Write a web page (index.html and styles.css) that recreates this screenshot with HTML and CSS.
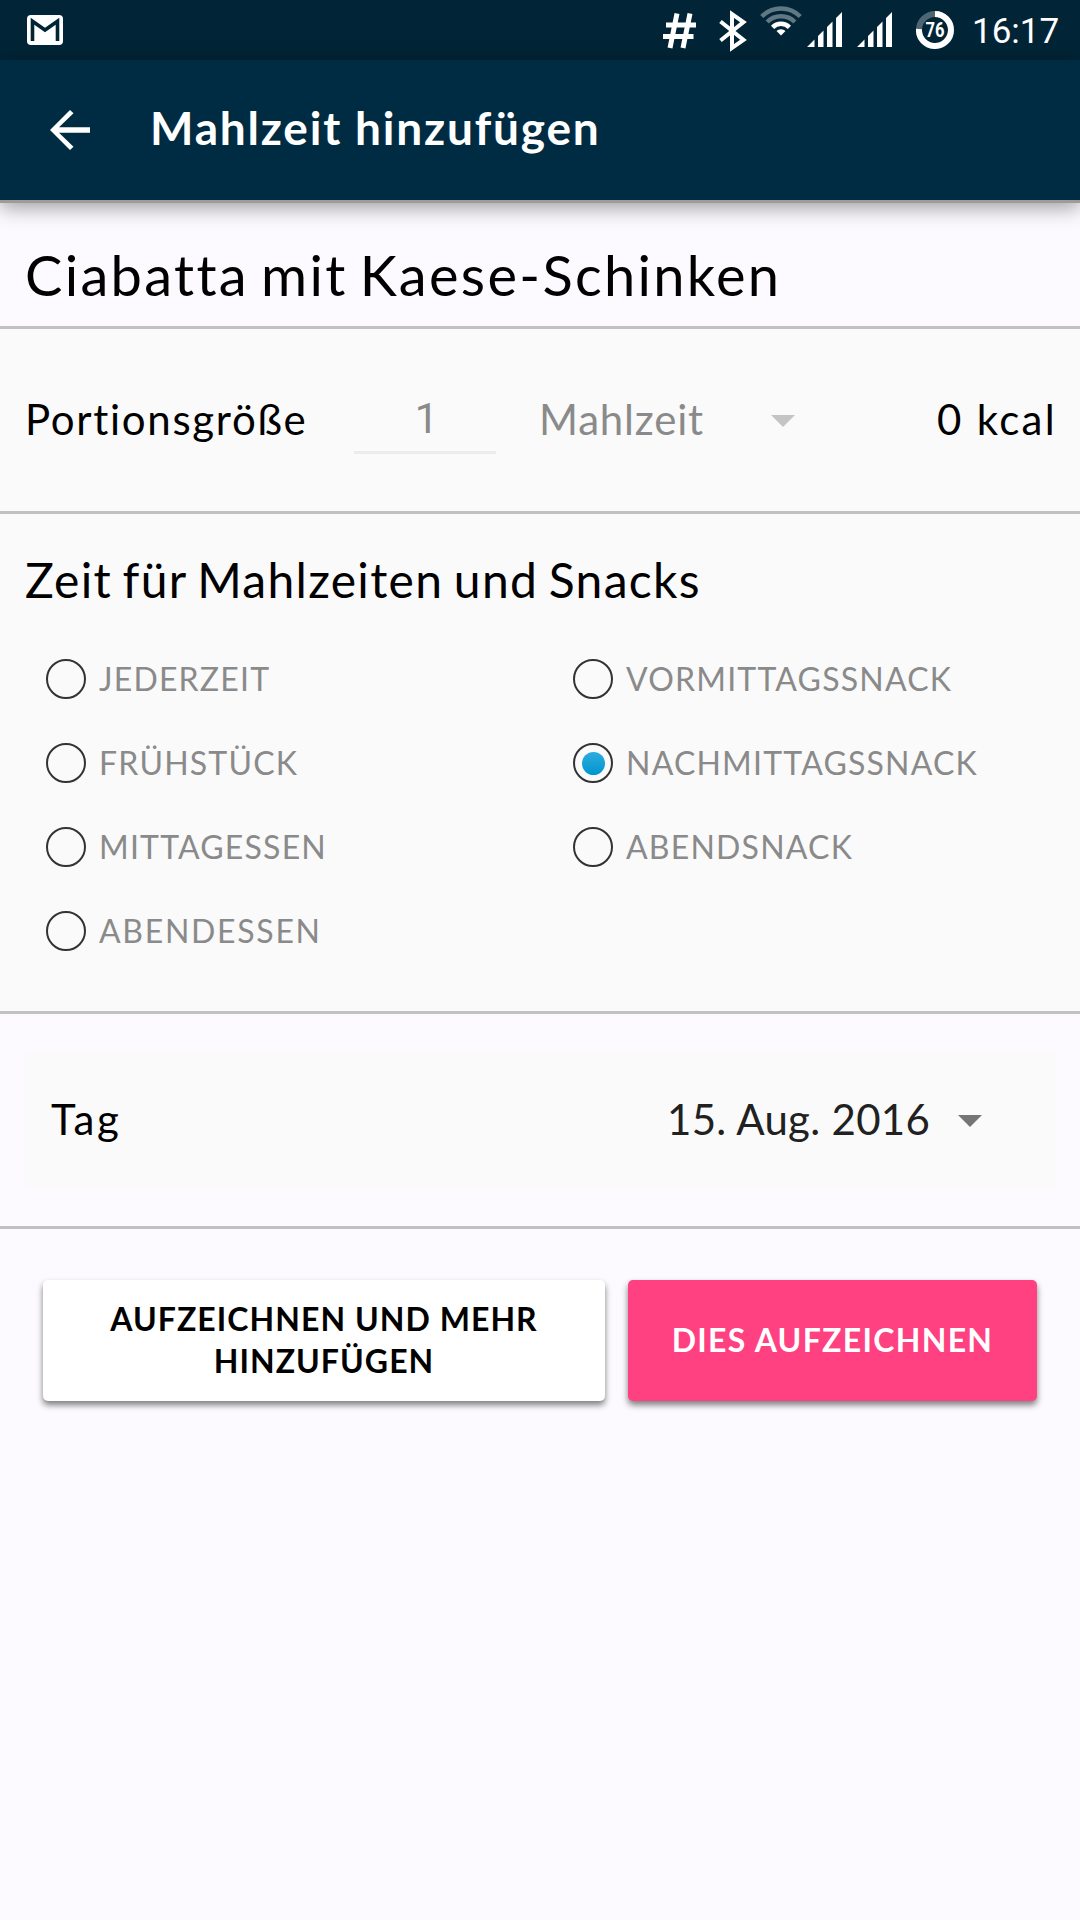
FILE: index.html
```html
<!DOCTYPE html>
<html lang="de">
<head>
<meta charset="utf-8">
<title>Mahlzeit hinzufügen</title>
<link rel="stylesheet" href="styles.css">
</head>
<body>
<div class="status">
  <svg class="gmail" width="36" height="30" viewBox="0 0 36 30"><rect width="36" height="30" rx="4" fill="#fff"/><path d="M5.5 26V6.2L18 15 30.500 6.200V26" fill="none" stroke="#012537" stroke-width="3.600"/></svg>
  <div class="status-icons">
    <svg class="hash" width="34" height="36" viewBox="0 0 34 36"><path d="M14 .5 7 35M27 .5 20 35M3 12H33M0 23.500H30.500" fill="none" stroke="#fff" stroke-width="5"/></svg>
    <svg class="bt" width="28" height="42" viewBox="0 0 28 42"><path d="M1.500 11.500 24.500 30 13 38V4L24.500 12 1.500 30.500" fill="none" stroke="#fff" stroke-width="4"/></svg>
    <svg class="wifi" width="42" height="30" viewBox="0 0 42 30"><g fill="none" stroke-width="4.500"><path d="M1.800 10.500a27 27 0 0 1 38.400 0M7.200 16a19.500 19.500 0 0 1 27.600 0" stroke="#5f7883"/><path d="M12.600 21.300a12 12 0 0 1 16.800 0" stroke="#fff"/></g><path d="M16.500 25a6.500 6.500 0 0 1 9 0L21 29.500Z" fill="#fff"/></svg>
    <svg class="signal" width="36" height="36" viewBox="0 0 36 36"><path d="M0 35 7.500 27.500V35ZM11 24l5.500-5.500V35H11ZM20 15l5.500-5.500V35H20ZM29 6l6-6v35h-6Z" fill="#fff"/></svg>
    <svg class="signal second" width="36" height="36" viewBox="0 0 36 36"><path d="M0 35 7.500 27.500V35ZM11 24l5.500-5.500V35H11ZM20 15l5.500-5.500V35H20ZM29 6l6-6v35h-6Z" fill="#fff"/></svg>
    <svg class="battery" width="38" height="38" viewBox="0 0 38 38"><circle cx="19" cy="19" r="16" fill="none" stroke="#4d6672" stroke-width="6"/><path d="M19 3a16 16 0 1 1-16 15" fill="none" stroke="#fff" stroke-width="6"/><text class="battery-text" x="19" y="26" text-anchor="middle" textLength="19" lengthAdjust="spacingAndGlyphs">76</text></svg>
    <span class="clock">16:17</span>
  </div>
</div>
<header class="appbar">
  <svg class="back" width="60" height="60" viewBox="0 0 24 24"><path d="M20 10.900H7.600l5.800-5.600L12 4l-8 8 8 8 1.400-1.300-5.800-5.600H20Z" fill="#fff"/></svg>
  <h1 class="appbar-title">Mahlzeit hinzufügen</h1>
</header>
<main>
  <section class="food"><h2 class="food-name">Ciabatta mit Kaese-Schinken</h2></section>
  <section class="portion">
    <span class="portion-label">Portionsgröße</span>
    <span class="amount">1</span>
    <span class="unit">Mahlzeit</span>
    <svg class="caret" width="24" height="12" viewBox="0 0 24 12"><path d="M0 0H24L12 12Z" fill="#c4c4c4"/></svg>
    <span class="kcal">0 kcal</span>
  </section>
  <section class="times">
    <h2 class="times-title">Zeit für Mahlzeiten und Snacks</h2>
    <div class="options">
      <div class="option"><i class="radio"></i><span>JEDERZEIT</span></div>
      <div class="option"><i class="radio"></i><span>VORMITTAGSSNACK</span></div>
      <div class="option"><i class="radio"></i><span>FRÜHSTÜCK</span></div>
      <div class="option"><i class="radio checked"></i><span>NACHMITTAGSSNACK</span></div>
      <div class="option"><i class="radio"></i><span>MITTAGESSEN</span></div>
      <div class="option"><i class="radio"></i><span>ABENDSNACK</span></div>
      <div class="option option-dinner"><i class="radio"></i><span>ABENDESSEN</span></div>
    </div>
  </section>
  <section class="day">
    <div class="day-row">
      <span class="day-label">Tag</span>
      <span class="date">15. Aug. 2016</span>
      <svg class="caret" width="24" height="12" viewBox="0 0 24 12"><path d="M0 0H24L12 12Z" fill="#757575"/></svg>
    </div>
  </section>
  <div class="actions">
    <button class="btn btn-light"><span>AUFZEICHNEN UND MEHR</span><span>HINZUFÜGEN</span></button>
    <button class="btn btn-pink"><span>DIES AUFZEICHNEN</span></button>
  </div>
</main>
</body>
</html>
```
FILE: styles.css
```css
* { box-sizing: border-box; }
body {
  margin: 0;
  width: 1080px;
  height: 1920px;
  overflow: hidden;
  background: #fcfafe;
  color: #000;
  font-family: Lato, sans-serif;
  font-variant-ligatures: none;
}
h1, h2 { margin: 0; font-weight: 400; white-space: nowrap; }
svg { display: block; flex: none; }

.status {
  display: flex;
  justify-content: space-between;
  height: 60px;
  padding: 0 22px 0 27px;
  background: #012537;
}
.gmail { margin-top: 15px; }
.status-icons { display: flex; align-items: flex-start; }
.hash { margin: 13px 22px 0 0; }
.bt { margin: 10px 13px 0 0; }
.wifi { margin: 6px 5px 0 0; }
.signal { margin: 12px 14px 0 0; }
.second { margin-right: 23px; }
.battery { margin: 11px 18px 0 0; }
.battery-text { fill: #fff; font: 700 20px Roboto, sans-serif; }
.clock {
  width: 86px;
  color: #fff;
  font: 400 35px/63px Roboto, sans-serif;
  white-space: nowrap;
}

.appbar {
  display: flex;
  align-items: center;
  height: 143px;
  padding-left: 40px;
  gap: 50px;
  background: #002c43;
  border-bottom: 3px solid #9e9b9b;
  box-shadow: 0 4px 20px rgba(0, 0, 0, .4);
}
.appbar-title {
  padding-bottom: 4px;
  color: #fff;
  font-size: 46px;
  font-weight: 700;
  line-height: 60px;
  letter-spacing: 1.8px;
}

.food { height: 126px; padding: 42px 25px 0; border-bottom: 3px solid #c1c1c1; }
.food-name { font-size: 56px; line-height: 60px; letter-spacing: 2.3px; word-spacing: -4.5px; }

.portion {
  display: flex;
  align-items: center;
  height: 185px;
  padding: 0 25px 3px;
  background: #fafafa;
  border-bottom: 3px solid #c1c1c1;
  font-size: 42px;
  white-space: nowrap;
}
.portion-label { width: 329px; letter-spacing: 1.7px; }
.amount {
  width: 142px;
  height: 70px;
  padding-left: 3px;
  margin-top: 1px;
  border-bottom: 3px solid #ececec;
  color: #8a8a8a;
  font-family: Roboto, sans-serif;
  line-height: 70px;
  text-align: center;
}
.unit { width: 232px; margin-left: 43px; color: #8a8a8a; letter-spacing: .8px; }
.portion .caret { margin-top: 4px; }
.kcal { margin: 0 -2px 0 auto; letter-spacing: 2.3px; }

.times {
  height: 500px;
  padding: 36px 25px 0;
  background: #fafafa;
  border-bottom: 3px solid #c1c1c1;
}
.times-title { font-size: 48px; line-height: 60px; letter-spacing: 1.3px; word-spacing: -3px; }
.options {
  display: grid;
  grid-template-columns: 527px 1fr;
  grid-auto-rows: 84px;
  margin: 27px 0 0 21px;
}
.option {
  display: flex;
  align-items: center;
  gap: 13px;
  color: #8a8a8a;
  font-size: 32px;
  letter-spacing: 1.2px;
}
.option-dinner { letter-spacing: 1.7px; }
.option span { padding-bottom: 2px; }
.radio {
  display: grid;
  place-items: center;
  width: 40px;
  height: 40px;
  border: 2px solid #333;
  border-radius: 50%;
}
.checked::after {
  content: "";
  width: 23px;
  height: 23px;
  border-radius: 50%;
  background: linear-gradient(#2eabdf, #0096ce);
}

.day { height: 215px; padding: 38px 25px 0; border-bottom: 3px solid #c1c1c1; }
.day-row {
  display: flex;
  align-items: center;
  height: 136px;
  padding: 0 73px 3px 26px;
  background: #fafafa;
  font-size: 42px;
}
.day-label { letter-spacing: 2.5px; }
.date {
  width: 291px;
  margin-left: auto;
  color: #212121;
  letter-spacing: .3px;
  white-space: nowrap;
}
.day-row .caret { margin-top: 5px; }

.actions { display: flex; gap: 23px; padding: 51px 43px 0; }
.btn {
  display: flex;
  flex-direction: column;
  align-items: center;
  justify-content: center;
  height: 121px;
  padding: 0 0 2px;
  border: 0;
  border-radius: 5px;
  box-shadow: 0 4px 6px rgba(0, 0, 0, .5);
  font: 700 32px/42px Lato, sans-serif;
  letter-spacing: 1.05px;
  white-space: nowrap;
}
.btn-light { width: 562px; background: #fff; color: #000; }
.btn-pink { width: 409px; background: #ff4081; color: #fff; letter-spacing: 1.3px; }
```
